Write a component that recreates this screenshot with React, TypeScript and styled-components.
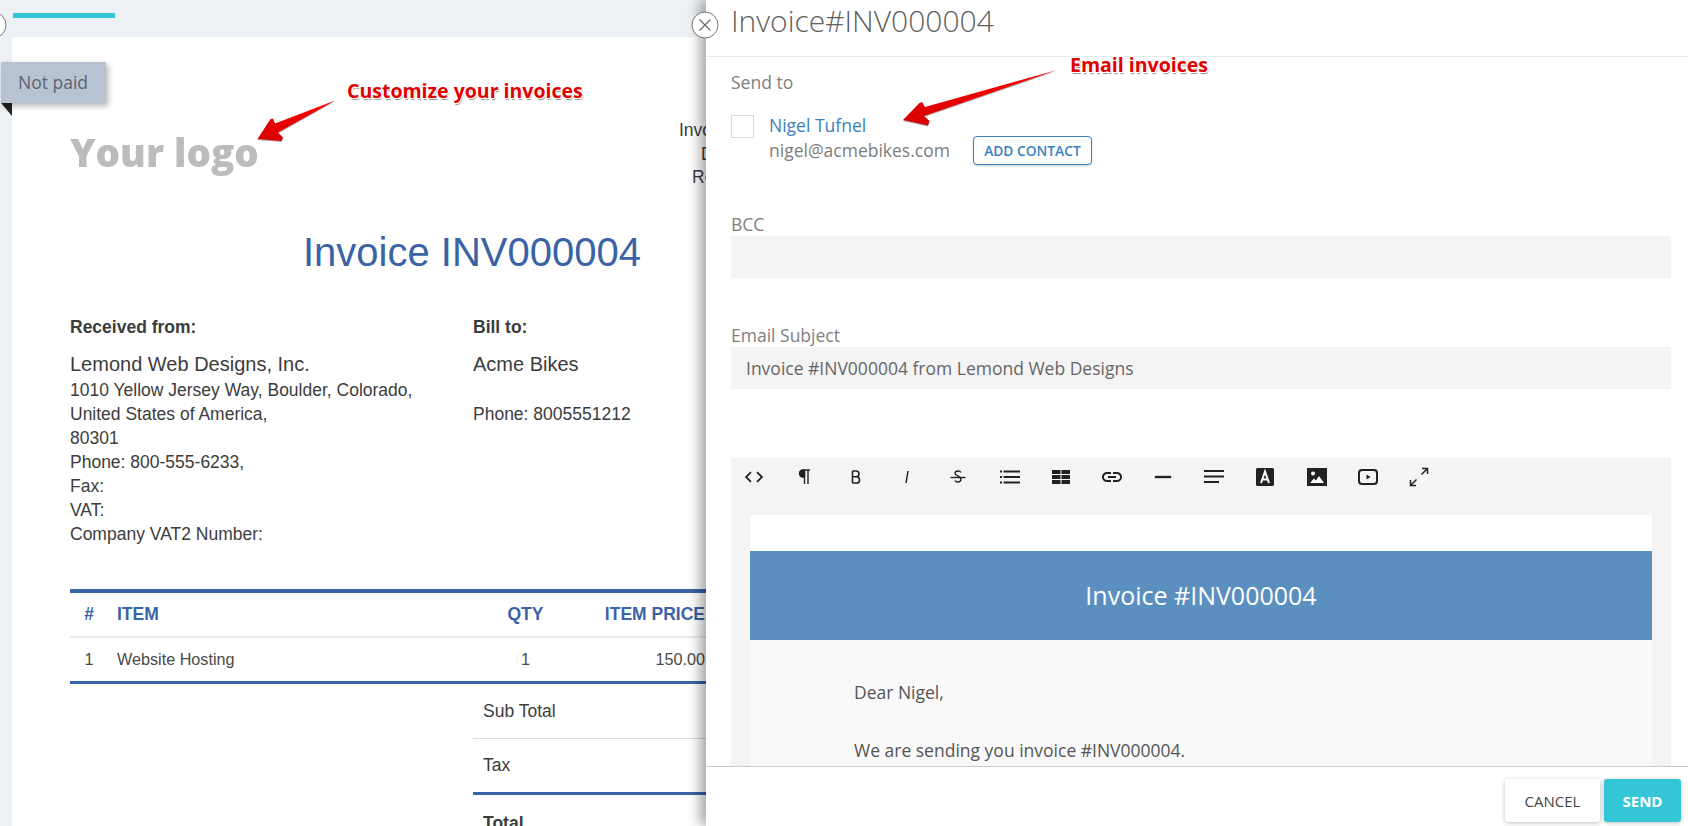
import * as React from "react";
import styled, { createGlobalStyle } from "styled-components";
import { MdCode, MdInsertLink, MdRemove } from "react-icons/md";

const GlobalStyle = createGlobalStyle`
	html, body {
		margin: 0;
		padding: 0;
		background: #fff;
	}
	* {
		box-sizing: border-box;
	}
`;

const UI_FONT = `"Open Sans", "Noto Sans", sans-serif`;
const DOC_FONT = `"Liberation Sans", Arial, sans-serif`;
const DOC_BLUE = "#3a63a6";

const Page = styled.div`
	position: relative;
	width: 1688px;
	height: 826px;
	overflow: hidden;
	display: flex;
	font-family: ${UI_FONT};
`;

/* left side: the invoice preview, cut off by the panel */
const InvoiceSide = styled.div`
	width: 706px;
	flex: none;
	height: 100%;
	overflow: hidden;
	background: #edf0f5;
	display: flex;
	flex-direction: column;
`;

const ProgressBand = styled.div`
	height: 37px;
	flex: none;
	padding: 13px 0 0 13px;
`;

const ProgressBar = styled.div`
	width: 102px;
	height: 5px;
	background: #33c6d6;
`;

const Sheet = styled.div`
	width: 920px;
	flex: 1;
	margin-left: 12px;
	background: #fff;
	padding: 82px 46px 0 58px;
	font-family: ${DOC_FONT};
	color: #3c3c3c;
`;

const SheetTop = styled.div`
	display: flex;
	justify-content: space-between;
	height: 110px;
`;

const LogoText = styled.div`
	margin-top: 11px;
	font-family: ${UI_FONT};
	font-weight: 800;
	font-size: 38.5px;
	line-height: 44px;
	color: #bcbcbc;
	filter: blur(0.4px);
`;

const MetaList = styled.div`
	width: 207px;
	font-size: 17.5px;
	line-height: 23.5px;
`;

const MetaRow = styled.div<{ $indent: number }>`
	padding-left: ${(p) => p.$indent}px;
`;

const InvoiceTitle = styled.h1`
	margin: 0;
	font-weight: 400;
	font-size: 40px;
	line-height: 46px;
	color: ${DOC_BLUE};
	text-align: center;
	padding-right: 12px;
`;

const Parties = styled.div`
	display: grid;
	grid-template-columns: 403px 1fr;
	margin-top: 43px;
`;

const PartyLabel = styled.div`
	font-weight: 700;
	font-size: 17.5px;
	line-height: 18px;
	margin-bottom: 15px;
`;

const PartyName = styled.div`
	font-size: 20px;
	line-height: 27px;
`;

const PartyLine = styled.div<{ $gap?: number }>`
	font-size: 17.5px;
	line-height: 24px;
	margin-top: ${(p) => p.$gap ?? 0}px;
`;

const Table = styled.div`
	margin-top: 43px;
	border-top: 4px solid ${DOC_BLUE};
	border-bottom: 3px solid ${DOC_BLUE};
`;

const TableRow = styled.div<{ $head?: boolean }>`
	display: grid;
	grid-template-columns: 38px 348px 103px 119px 1fr;
	column-gap: 9px;
	align-items: center;
	height: ${(p) => (p.$head ? 45 : 43)}px;
	border-bottom: ${(p) => (p.$head ? "2px solid #e8ecf1" : "none")};
	font-size: ${(p) => (p.$head ? 17.5 : 16.2)}px;
	font-weight: ${(p) => (p.$head ? 700 : 400)};
	color: ${(p) => (p.$head ? DOC_BLUE : "#4a4a4a")};
`;

const Cell = styled.div<{ $align?: string }>`
	text-align: ${(p) => p.$align ?? "left"};
	white-space: nowrap;
`;

const Totals = styled.div`
	margin-left: 403px;
`;

const TotalRow = styled.div<{ $strong?: boolean; $line?: string; $h: number }>`
	height: ${(p) => p.$h}px;
	display: flex;
	align-items: center;
	padding-left: 10px;
	font-size: 17.5px;
	font-weight: ${(p) => (p.$strong ? 700 : 400)};
	border-bottom: ${(p) => p.$line ?? "none"};
`;

/* right side: email panel */
const EmailPanel = styled.div`
	position: relative;
	z-index: 2;
	flex: 1;
	height: 100%;
	background: #fff;
	box-shadow: -6px 0 12px rgba(0, 0, 0, 0.35);
	display: flex;
	flex-direction: column;
`;

const PanelHeader = styled.div`
	height: 57px;
	flex: none;
	padding-left: 25px;
	border-bottom: 1px solid #e6e9ee;
	font-weight: 300;
	font-size: 30px;
	line-height: 41px;
	color: #5f5f5f;
`;

const PanelBody = styled.div`
	flex: 1;
	min-height: 0;
	overflow: hidden;
	padding: 14px 17px 0 25px;
	color: #808080;
`;

const FieldLabel = styled.div<{ $top?: number }>`
	font-size: 17.5px;
	line-height: 22px;
	margin-top: ${(p) => p.$top ?? 0}px;
`;

const ContactRow = styled.div`
	display: flex;
	margin-top: 20px;
	height: 68px;
`;

const CheckBox = styled.div`
	width: 23px;
	height: 23px;
	border: 1px solid #d9d9d9;
	background: #fff;
	margin-top: 2px;
	margin-right: 15px;
`;

const ContactName = styled.div`
	font-size: 17.5px;
	line-height: 24px;
	color: #3a80c0;
`;

const ContactMail = styled.div`
	font-size: 17.5px;
	line-height: 26px;
	color: #7d7d7d;
`;

const OutlineButton = styled.button`
	align-self: flex-start;
	margin: 23px 0 0 23px;
	width: 119px;
	height: 29px;
	padding: 0;
	background: #fff;
	border: 1px solid #3a80c0;
	border-radius: 4px;
	box-shadow: 0 1px 2px rgba(0, 0, 0, 0.2);
	color: #3a80c0;
	font-family: ${UI_FONT};
	font-weight: 600;
	font-size: 13.75px;
`;

const TextField = styled.div<{ $after: number }>`
	height: 42px;
	margin: 1px 0 ${(p) => p.$after}px;
	padding: 0 15px;
	background: #f4f4f4;
	font-size: 17.5px;
	line-height: 42px;
	color: #666;
`;

const Editor = styled.div`
	background: #f4f4f4;
	padding: 0 19px;
	height: 400px;
`;

const Toolbar = styled.div`
	height: 57px;
	margin-left: -22px;
	padding-top: 7px;
	display: flex;
	align-items: flex-start;
`;

const ToolButton = styled.div`
	width: 51.2px;
	height: 24px;
	flex: none;
	display: flex;
	align-items: center;
	justify-content: center;
	color: #222;
`;

const MailFrame = styled.div`
	background: #fff;
	padding-top: 36px;
`;

const MailBanner = styled.div`
	height: 89px;
	background: #5a8fbf;
	color: #fff;
	font-size: 25px;
	line-height: 89px;
	text-align: center;
`;

const MailBody = styled.div`
	background: #f9f9f9;
	padding: 41px 104px 0;
	height: 300px;
	color: #555;
	font-size: 17.5px;
`;

const MailLine = styled.p`
	margin: 0 0 36px;
	line-height: 22px;
`;

const PanelFooter = styled.div`
	height: 60px;
	flex: none;
	border-top: 1px solid #ccc;
	padding: 12px 7px 0 0;
	display: flex;
	justify-content: flex-end;
	gap: 4px;
	background: #fff;
`;

const FooterButton = styled.button<{ $primary?: boolean }>`
	height: 43px;
	width: ${(p) => (p.$primary ? 77 : 95)}px;
	padding: 0;
	border: none;
	border-radius: 3px;
	background: ${(p) => (p.$primary ? "#33c6d6" : "#fff")};
	color: ${(p) => (p.$primary ? "#fff" : "#444")};
	box-shadow: 0 1px 4px rgba(0, 0, 0, 0.25);
	font-family: ${UI_FONT};
	font-weight: ${(p) => (p.$primary ? 700 : 400)};
	font-size: 15px;
`;

/* things lying over the page */
const Ribbon = styled.div`
	position: absolute;
	left: 1px;
	top: 62px;
	width: 105px;
	height: 41px;
	z-index: 1;
	background: #b8c3d2;
	box-shadow: 2px 3px 6px rgba(0, 0, 0, 0.3);
	color: #5b6470;
	font-size: 17.5px;
	line-height: 41px;
	padding-left: 17px;
`;

const RibbonFold = styled.div`
	position: absolute;
	left: 1px;
	top: 103px;
	width: 0;
	height: 0;
	border-right: 11px solid #222;
	border-top: 13px solid transparent;
	transform: scaleY(-1);
`;

const Callout = styled.div<{ $x: number; $y: number }>`
	position: absolute;
	left: ${(p) => p.$x}px;
	top: ${(p) => p.$y}px;
	z-index: 5;
	color: #e00000;
	font-weight: 700;
	font-size: 19.5px;
	line-height: 24px;
	white-space: nowrap;
	text-shadow: 1px 1px 0 #fff, -1px -1px 0 #fff, 1px -1px 0 #fff, -1px 1px 0 #fff, 1px 2px 1px rgba(0, 0, 0, 0.45);
`;

const ArrowSvg = styled.svg<{ $x: number; $y: number }>`
	position: absolute;
	left: ${(p) => p.$x}px;
	top: ${(p) => p.$y}px;
	z-index: 5;
	overflow: visible;
	filter: drop-shadow(0.5px 1px 0.5px rgba(0, 0, 0, 0.35));
`;

const CloseButton = styled.svg<{ $x: number }>`
	position: absolute;
	left: ${(p) => p.$x}px;
	top: 11px;
	z-index: 6;
`;

const CloseIcon = ({ x }: { x: number }) => (
	<CloseButton $x={x} width="28" height="28" viewBox="0 0 28 28">
		<circle cx="14" cy="14" r="13" fill="#fff" stroke="#777" strokeWidth="1" />
		<path d="M8.5 8.5l11 11M19.5 8.5l-11 11" stroke="#666" strokeWidth="1.2" fill="none" />
	</CloseButton>
);

const strokeIcon = (body: React.ReactNode) => (
	<svg width="24" height="24" viewBox="0 0 24 24" fill="none" stroke="#222" strokeWidth="1.4">
		{body}
	</svg>
);

const toolIcons: React.ReactNode[] = [
	<MdCode size={22} />,
	strokeIcon(
		<>
			<path d="M15 5v14M11.5 5v14M17 5H10a3.4 3.4 0 0 0 0 7h1.5" />
			<path d="M10 5.5a3 3 0 0 0 0 6h1.5v-6z" fill="#222" />
		</>
	),
	strokeIcon(
		<path d="M8.5 6v12M8.5 6h3.6a2.9 2.9 0 0 1 0 5.8H8.5M12.4 11.8a3.1 3.1 0 0 1 0 6.2H8.5" strokeWidth="1.6" />
	),
	strokeIcon(<path d="M13 6l-2 12" strokeWidth="1.5" />),
	strokeIcon(
		<>
			<path d="M4.5 12.5h15" />
			<path d="M15 7.5c-.6-1-1.6-1.5-3-1.5-1.8 0-3 .9-3 2.2 0 3 6 2.6 6 6.4 0 1.5-1.3 2.4-3.100 2.400-1.500 0-2.500-.5-3.100-1.500" />
		</>
	),
	<svg width="24" height="24" viewBox="0 0 24 24" fill="#222">
		<path d="M2 5.500h2v2H2zM2 11h2v2H2zM2 16.500h2v2H2zM5.500 5.500H22v2H5.500zM5.500 11H22v2H5.500zM5.500 16.500H22v2H5.500z" />
	</svg>,
	<svg width="24" height="24" viewBox="0 0 24 24" fill="#222">
		<path d="M3 5h8.500v4H3zM12.500 5H21v4h-8.500zM3 10h8.500v4H3zM12.500 10H21v4h-8.500zM3 15h8.500v4H3zM12.500 15H21v4h-8.500z" />
	</svg>,
	<MdInsertLink size={24} />,
	<MdRemove size={28} />,
	<svg width="24" height="24" viewBox="0 0 24 24" fill="#222">
		<path d="M2 5h20v2H2zM2 10.500h20v2H2zM2 16h15v2H2z" />
	</svg>,
	<svg width="24" height="24" viewBox="0 0 24 24">
		<rect x="3" y="3" width="18" height="18" rx="1.500" fill="#222" />
		<path d="M8 18L12 6.500L16 18M9.300 14.500h5.400" stroke="#fff" strokeWidth="2" fill="none" />
	</svg>,
	<svg width="24" height="24" viewBox="0 0 24 24">
		<rect x="2" y="3" width="20" height="18" fill="#222" />
		<circle cx="8" cy="8.500" r="2" fill="#fff" />
		<path d="M5 18l4-4.500 2 2 3-4.500 5 7z" fill="#fff" />
	</svg>,
	<svg width="24" height="24" viewBox="0 0 24 24">
		<rect x="3" y="5" width="18" height="14" rx="3" fill="none" stroke="#222" strokeWidth="2" />
		<path d="M10.500 9.500v5l4-2.500z" fill="#222" />
	</svg>,
	strokeIcon(
		<path d="M15 3.500H20.500V9M20.500 3.500l-6 6M9 20.500H3.500V15M3.500 20.500l6-6" strokeWidth="1.500" />
	),
];

const rows = [
	"1010 Yellow Jersey Way, Boulder, Colorado,",
	"United States of America,",
	"80301",
	"Phone: 800-555-6233,",
	"Fax:",
	"VAT:",
	"Company VAT2 Number:",
];

export default function App() {
	return (
		<Page>
			<GlobalStyle />
			<InvoiceSide>
				<ProgressBand>
					<ProgressBar />
				</ProgressBand>
				<Sheet>
					<SheetTop>
						<LogoText>Your logo</LogoText>
						<MetaList>
							<MetaRow $indent={0}>Invoice #</MetaRow>
							<MetaRow $indent={22}>Date</MetaRow>
							<MetaRow $indent={13}>Ref No</MetaRow>
						</MetaList>
					</SheetTop>
					<InvoiceTitle>Invoice INV000004</InvoiceTitle>
					<Parties>
						<div>
							<PartyLabel>Received from:</PartyLabel>
							<PartyName>Lemond Web Designs, Inc.</PartyName>
							{rows.map((line) => (
								<PartyLine key={line}>{line}</PartyLine>
							))}
						</div>
						<div>
							<PartyLabel>Bill to:</PartyLabel>
							<PartyName>Acme Bikes</PartyName>
							<PartyLine $gap={24}>Phone: 8005551212</PartyLine>
						</div>
					</Parties>
					<Table>
						<TableRow $head>
							<Cell $align="center">#</Cell>
							<Cell>ITEM</Cell>
							<Cell $align="center">QTY</Cell>
							<Cell $align="right">ITEM PRICE</Cell>
						</TableRow>
						<TableRow>
							<Cell $align="center">1</Cell>
							<Cell>Website Hosting</Cell>
							<Cell $align="center">1</Cell>
							<Cell $align="right">150.00</Cell>
						</TableRow>
					</Table>
					<Totals>
						<TotalRow $h={55} $line="1px solid #ddd">Sub Total</TotalRow>
						<TotalRow $h={56} $line={`3px solid ${DOC_BLUE}`}>Tax</TotalRow>
						<TotalRow $h={56} $strong>Total</TotalRow>
					</Totals>
				</Sheet>
			</InvoiceSide>

			<EmailPanel>
				<PanelHeader>Invoice#INV000004</PanelHeader>
				<PanelBody>
					<FieldLabel>Send to</FieldLabel>
					<ContactRow>
						<CheckBox />
						<div>
							<ContactName>Nigel Tufnel</ContactName>
							<ContactMail>nigel@acmebikes.com</ContactMail>
						</div>
						<OutlineButton>ADD CONTACT</OutlineButton>
					</ContactRow>
					<FieldLabel $top={32}>BCC</FieldLabel>
					<TextField $after={46} />
					<FieldLabel>Email Subject</FieldLabel>
					<TextField $after={69}>Invoice #INV000004 from Lemond Web Designs</TextField>
					<Editor>
						<Toolbar>
							{toolIcons.map((icon, idx) => (
								<ToolButton key={idx}>{icon}</ToolButton>
							))}
						</Toolbar>
						<MailFrame>
							<MailBanner>Invoice #INV000004</MailBanner>
							<MailBody>
								<MailLine>Dear Nigel,</MailLine>
								<MailLine>We are sending you invoice #INV000004.</MailLine>
							</MailBody>
						</MailFrame>
					</Editor>
				</PanelBody>
				<PanelFooter>
					<FooterButton>CANCEL</FooterButton>
					<FooterButton $primary>SEND</FooterButton>
				</PanelFooter>
			</EmailPanel>

			<Ribbon>Not paid</Ribbon>
			<RibbonFold />
			<CloseIcon x={-21} />
			<CloseIcon x={691} />

			<Callout $x={347} $y={79}>Customize your invoices</Callout>
			<ArrowSvg $x={245} $y={90} width="100" height="60" viewBox="0 0 100 60">
				<defs>
					<linearGradient id="arrowFillA" x1="1" y1="0" x2="0" y2="1">
						<stop offset="0" stopColor="#ff0000" />
						<stop offset="1" stopColor="#d80000" />
					</linearGradient>
				</defs>
				<path
					d="M90 10.500L30 33.500L28 28.500L25.500 29L12.500 49L36.500 51L38 47.500L33 42.500z"
					fill="url(#arrowFillA)"
				/>
			</ArrowSvg>
			<Callout $x={1070} $y={53}>Email invoices</Callout>
			<ArrowSvg $x={895} $y={60} width="170" height="75" viewBox="0 0 170 75">
				<defs>
					<linearGradient id="arrowFillB" x1="1" y1="0" x2="0" y2="1">
						<stop offset="0" stopColor="#ff0000" />
						<stop offset="1" stopColor="#d80000" />
					</linearGradient>
				</defs>
				<path
					d="M162 10L30 47L27 42L24.500 43L8 60L33 65.500L34.500 61L29 56z"
					fill="url(#arrowFillB)"
				/>
			</ArrowSvg>
		</Page>
	);
}
